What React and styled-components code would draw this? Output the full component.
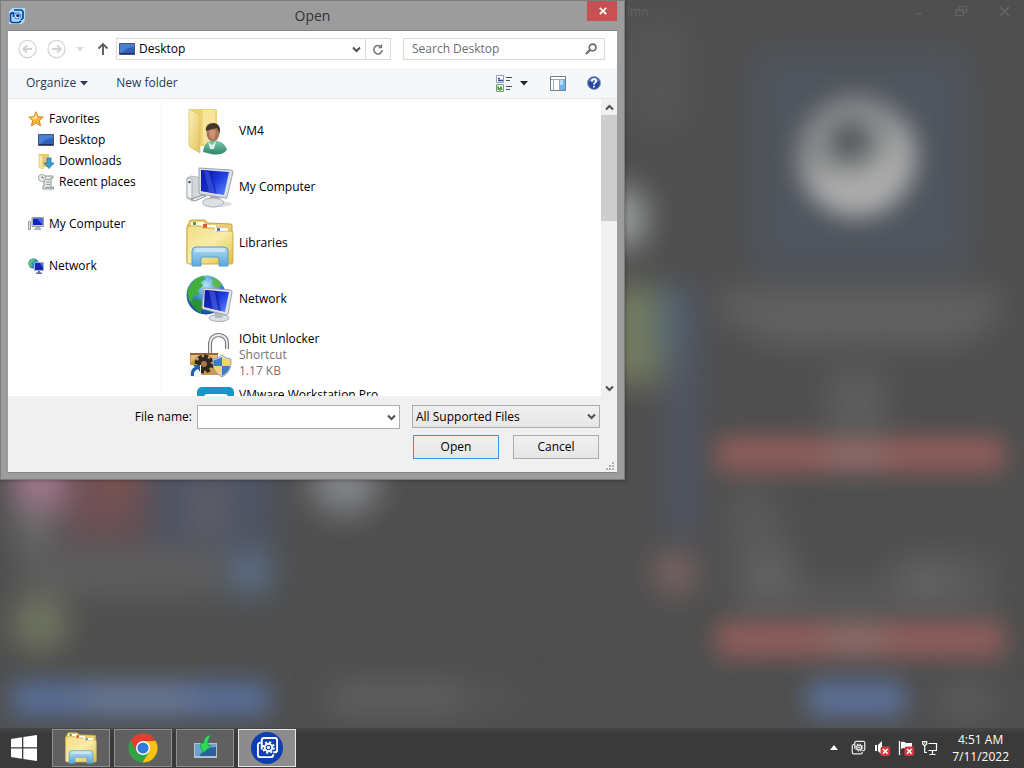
import React, { useState } from 'react';
import styled, { createGlobalStyle } from 'styled-components';

const GlobalStyles = createGlobalStyle`
  * { box-sizing: border-box; }

  body {
    margin: 0;
    background: #4f4f4f;
    color: #000;
    font: 12px/16px "Open Sans", "Noto Sans", sans-serif;
  }

  button, input, select { font: inherit; color: inherit; }
  svg { display: block; flex: none; }
`;

/* ---------- desktop ---------- */

const Screen = styled.div`
  min-height: 100vh;
  display: flex;
  flex-direction: column;
`;

const Workspace = styled.main`
  position: relative;
  flex: 1;
  overflow: hidden;
  background: #4f4f4f;
`;

const Backdrop = styled.svg`
  position: absolute;
  inset: 0;
  width: 100%;
  height: 100%;
`;

const BackCaption = styled.div`
  position: absolute;
  inset: 0 0 auto 0;
  height: 24px;
  padding: 0 12px 0 627px;
  display: flex;
  align-items: center;
  gap: 30px;
  color: #646464;
`;

const BackTitle = styled.span`
  flex: 1;
`;

/* ---------- dialog ---------- */

const Dialog = styled.section`
  position: relative;
  width: 625px;
  max-width: 100%;
  padding: 0 7px 6px;
  background: #9c9c9c;
  border: 1px solid #7c7c7c;
  box-shadow: 0 0 4px rgba(0, 0, 0, 0.4);
`;

const TitleBar = styled.header`
  height: 29px;
  display: grid;
  grid-template-columns: 30px 1fr 30px;
  align-items: center;

  svg { margin-left: 1px; }
`;

const Title = styled.h1`
  margin: 0;
  text-align: center;
  color: #333;
  font-size: 14px;
  font-weight: 400;
  line-height: 20px;
`;

const CloseButton = styled.button`
  align-self: start;
  width: 30px;
  height: 20px;
  padding: 0;
  display: flex;
  align-items: center;
  justify-content: center;
  border: 0;
  background: #c84f52;
`;

const Body = styled.div`
  background: #fff;
  border: solid #848484;
  border-width: 1px 0;
`;

const NavRow = styled.nav`
  height: 37px;
  padding: 0 12px 1px 10px;
  display: flex;
  align-items: center;
`;

const IconButton = styled.button`
  width: ${(p) => p.$w || 20}px;
  height: 20px;
  padding: 0;
  display: flex;
  align-items: center;
  justify-content: center;
  border: 0;
  background: none;
`;

const HistoryButtons = styled.div`
  width: 98px;
  display: flex;
  align-items: center;
  gap: 9px;
`;

const Field = styled.div`
  height: 22px;
  display: flex;
  align-items: center;
  border: 1px solid #d9d9d9;
  background: #fff;
`;

const AddressField = styled(Field)`
  flex: 1;
  margin-right: 12px;
  padding-left: 2px;
  gap: 4px;
`;

const AddressText = styled.span`
  flex: 1;
`;

const RefreshButton = styled(IconButton)`
  border-left: 1px solid #d9d9d9;
`;

const SearchField = styled(Field)`
  width: 202px;
  padding: 0 7px 0 8px;

  input {
    flex: 1;
    min-width: 0;
    padding: 0;
    border: 0;
    outline: 0;
    background: none;
  }

  input::placeholder { color: #6d6d6d; opacity: 1; }
`;

const CommandBar = styled.div`
  height: 31px;
  padding: 0 15px 0 18px;
  display: flex;
  align-items: center;
  background: #f5f7f8;
  border-bottom: 1px solid #e3e8ec;
  color: #2a3a58;
`;

const CommandButton = styled.button`
  margin-right: 28px;
  padding: 0;
  display: flex;
  align-items: center;
  gap: 4px;
  border: 0;
  background: none;
`;

const CommandIcons = styled.div`
  margin-left: auto;
  display: flex;
  align-items: center;
`;

const ViewIcons = styled.div`
  margin-right: 13px;
  display: flex;
`;

const PaneIcon = styled.div`
  margin-right: 18px;
`;

const Browser = styled.div`
  height: 297px;
  display: grid;
  grid-template-columns: 153px 1fr 16px;
  overflow: hidden;
`;

const Sidebar = styled.ul`
  margin: 0;
  padding: 9px 0 0 20px;
  list-style: none;
  border-right: 1px solid #fafafa;
`;

const SidebarItem = styled.li`
  height: 21px;
  margin-bottom: ${(p) => (p.$last ? 21 : 0)}px;
  padding-left: ${(p) => (p.$child ? 10 : 0)}px;

  a {
    display: flex;
    align-items: center;
    gap: 5px;
    height: 21px;
    color: #000;
    text-decoration: none;
  }
`;

const FileList = styled.ul`
  margin: 0;
  padding: 4px 0 0 25px;
  list-style: none;
  overflow: hidden;
`;

const FileItem = styled.li`
  height: 56px;
  padding: 4px 0;
  display: flex;
  align-items: ${(p) => (p.$top ? 'flex-start' : 'center')};
  gap: 5px;
`;

const FileText = styled.div`
  color: #737373;

  strong {
    display: block;
    color: #000;
    font-weight: 400;
  }

  span { display: block; }
`;

const ScrollBar = styled.div`
  display: flex;
  flex-direction: column;
  align-items: center;
  background: #f0f0f0;
`;

const ScrollThumb = styled.div`
  width: 16px;
  height: 106px;
  margin-bottom: auto;
  background: #cdcdcd;
`;

const ScrollButton = styled(IconButton)`
  width: 16px;
  height: 16px;
`;

const Footer = styled.footer`
  height: 76px;
  padding: 9px 17px 0 0;
  display: grid;
  grid-template-columns: 1fr 203px 12px 188px;
  grid-template-rows: 24px 24px;
  row-gap: 6px;
  background: #f0f0f0;
`;

const FileLabel = styled.label`
  padding-right: 5px;
  line-height: 24px;
  text-align: right;
`;

const ComboBox = styled.div`
  padding: 0 3px 0 4px;
  display: flex;
  align-items: center;
  border: 1px solid #abadb3;
  background: #fff;

  input {
    flex: 1;
    min-width: 0;
    padding: 0;
    border: 0;
    outline: 0;
  }
`;

const TypeSelect = styled.div`
  grid-column: 4;
  display: grid;
  align-items: center;
  height: 23px;

  select, svg { grid-area: 1 / 1; }

  select {
    width: 100%;
    height: 23px;
    padding: 0 20px 0 3px;
    border: 1px solid #acacac;
    border-radius: 0;
    background: linear-gradient(#f0f0f0, #e6e6e6);
    appearance: none;
  }

  svg {
    justify-self: end;
    margin-right: 4px;
    pointer-events: none;
  }
`;

const FooterButtons = styled.div`
  grid-column: 4;
  display: flex;
  justify-content: space-between;
  padding: 0 1px;
`;

const PushButton = styled.button`
  width: 86px;
  height: 24px;
  padding: 0;
  border: 1px solid ${(p) => (p.$primary ? '#4a90dc' : '#acacac')};
  background: linear-gradient(#f0f0f0, #e6e6e6);
`;

const Grip = styled.svg`
  position: absolute;
  right: 9px;
  bottom: 8px;
`;

/* ---------- taskbar ---------- */

const Taskbar = styled.footer`
  height: 40px;
  padding: 0 15px 1px 0;
  display: flex;
  align-items: center;
  gap: 4px;
  background: linear-gradient(#464646, #3a3a3a 6px);
`;

const StartButton = styled.button`
  width: 48px;
  height: 38px;
  padding: 0 0 0 11px;
  border: 0;
  background: none;
`;

const TaskButton = styled.button`
  width: 58px;
  height: 38px;
  padding: 0;
  display: flex;
  align-items: center;
  justify-content: center;
  border: 1px solid ${(p) => (p.$active ? '#e8e8e8' : '#8e8e8e')};
  background: ${(p) => (p.$active ? '#8c8c8c' : '#606060')};
`;

const Tray = styled.div`
  margin-left: auto;
  display: flex;
  align-items: center;
  gap: 8px;
`;

const Clock = styled.time`
  margin-left: 6px;
  color: #fff;
  line-height: 17px;
  text-align: center;

  span { display: block; }
`;

/* ---------- small glyphs ---------- */

const Chevron = ({ up, color = '#505050' }) => (
  <svg width="9" height="7" viewBox="0 0 9 7" aria-hidden="true">
    <path d={up ? 'M1 5.5 4.5 2 8 5.5' : 'M1 1.5 4.5 5 8 1.5'} fill="none" stroke={color} strokeWidth="2" />
  </svg>
);

const Triangle = ({ color }) => (
  <svg width="8" height="5" viewBox="0 0 8 5" aria-hidden="true">
    <path d="M0 0h8L4 4.5z" fill={color} />
  </svg>
);

const HistoryArrow = ({ forward }) => (
  <svg width="20" height="20" viewBox="0 0 20 20" fill="none" stroke="#d2d2d2" aria-hidden="true">
    <circle cx="9.5" cy="10" r="8.6" strokeWidth="1.2" />
    <path d={forward ? 'M5 10h8.5M10 6.3 13.7 10 10 13.700' : 'M14 10H5.500M9 6.3 5.3 10 9 13.700'} strokeWidth="1.9" />
  </svg>
);

const UpArrow = () => (
  <svg width="12" height="14" viewBox="0 0 12 14" fill="none" stroke="#5c5c5c" strokeWidth="1.9" aria-hidden="true">
    <path d="M6 13V2M1.5 6.5 6 2l4.5 4.5" />
  </svg>
);

const RefreshGlyph = () => (
  <svg width="12" height="13" viewBox="0 0 12 13" aria-hidden="true">
    <path d="M9.2 4A4.2 4.2 0 1 0 10.2 7" fill="none" stroke="#777" strokeWidth="1.6" />
    <path d="M10.2.8v4.4H5.8z" fill="#777" />
  </svg>
);

const SearchGlyph = () => (
  <svg width="12" height="12" viewBox="0 0 12 12" fill="none" stroke="#6b6b6b" aria-hidden="true">
    <circle cx="7.6" cy="4.4" r="3.3" strokeWidth="1.6" />
    <path d="M5.2 6.8 1 11" strokeWidth="2.2" />
  </svg>
);

const CrossGlyph = () => (
  <svg width="8" height="8" viewBox="0 0 8 8" aria-hidden="true">
    <path d="m.8.8 6.4 6.4M7.2.8.8 7.2" stroke="#fff" strokeWidth="1.7" />
  </svg>
);

const ViewGlyph = () => (
  <svg width="17" height="17" viewBox="0 0 17 17" aria-hidden="true">
    <path fill="#fff" stroke="#8fa3bd" d="M.5.5h7v7h-7z" />
    <path fill="#fff" stroke="#7fa37b" d="M.5 9.5h7v7h-7z" />
    <path d="M2 5.5h5M2 3.500h2" stroke="#2c4a9c" strokeWidth="1.4" />
    <path d="M2 15v-3l2 3 1-3 1 3" fill="none" stroke="#4b9a3c" strokeWidth="1.300" />
    <path d="M10 2.500h6M10 5.500h4M10 11.500h6M10 14.500h4" stroke="#44505f" />
  </svg>
);

const PreviewPaneGlyph = () => (
  <svg width="16" height="15" viewBox="0 0 16 15" aria-hidden="true">
    <path fill="#fff" stroke="#6d7e90" d="M.5.5h15v14H.5z" />
    <path d="M1 3.500h14M3.500 4v10M9.500 4v10" stroke="#9aa7b4" />
    <path fill="#6db6ea" d="M10 4h5v10h-5z" />
    <path fill="#b4def9" d="M10 4h3v5h-3z" />
  </svg>
);

const HelpGlyph = () => (
  <svg width="14" height="14" viewBox="0 0 14 14" aria-hidden="true">
    <circle cx="7" cy="7" r="6.500" fill="#24489f" stroke="#8e9dbb" />
    <path d="M2 5a5.300 5.300 0 0 1 10 0Q7 8 2 5" fill="#5d84cd" />
    <path d="M4.800 5.300C4.800 2.300 9.200 2.400 9.200 5 9.200 6.700 7 6.500 7 8.700M7 9.700v1.800" fill="none" stroke="#fff" strokeWidth="1.700" />
  </svg>
);

/* Two overlapping rounded frames with a cog in the middle, used in the taskbar and the tray */
const CaptureMark = ({ size, color, width = 2 }) => (
  <svg width={size} height={size} viewBox="0 0 24 24" fill="none" stroke={color} strokeWidth={width} aria-hidden="true">
    <path d="M5 7H4.500A2.500 2.500 0 0 0 2 9.500v10A2.500 2.500 0 0 0 4.500 22h11a2.500 2.500 0 0 0 2.500-2.500V19" />
    <path d="M6 14V4.500A2.500 2.500 0 0 1 8.500 2h11A2.500 2.500 0 0 1 22 4.500v10a2.500 2.500 0 0 1-2.500 2.500H18" />
    <circle cx="13" cy="12" r="5.600" strokeDasharray="2.200 2.198" />
    <circle cx="13" cy="12" r="3.900" />
    <circle cx="13" cy="12" r="1.700" fill={color} stroke="none" />
  </svg>
);

const AppGlyph = () => (
  <svg width="16" height="16" viewBox="0 0 16 16" aria-hidden="true">
    <path fill="#a6e0ff" d="M3 0h13v12l-3 4H0V4z" />
    <path d="M5 2h7.500L14 3.500V10l-2 2M3.500 4.500 1.500 6v7L3 14.500h7l2-1.500M4.500 9V4" fill="none" stroke="#173a94" strokeWidth="1.700" />
    <circle cx="8.500" cy="7.800" r="3" fill="#fff" stroke="#2d86e4" strokeWidth="1.500" strokeDasharray="2 .7" />
    <circle cx="8.800" cy="7.600" r="1.700" fill="#16266f" />
  </svg>
);

/* ---------- 16px icons ---------- */

const DesktopSmall = () => (
  <svg width="16" height="16" viewBox="0 0 16 16" aria-hidden="true">
    <path d="M.5 2.500h15v11H.5z" fill="#2d60b8" stroke="#48566e" />
    <path d="M1 3h14v3Q7 6 3 12H1z" fill="#4a80d2" />
    <path d="M1 12h14v1H1z" fill="#1d3156" />
  </svg>
);

const StarSmall = () => (
  <svg width="16" height="16" viewBox="0 0 16 16" aria-hidden="true">
    <path d="m8 .8 2 4.900 5.300.4-4 3.500 1.200 5.300L8 12l-4.600 2.900 1.300-5.300-4-3.500 5.200-.4z" fill="#f8b83a" stroke="#d98324" />
    <path d="m8 3 1.300 3.500-2.800 2L3 6.700l3.500-.3z" fill="#ffe9a1" />
  </svg>
);

const DownloadsSmall = () => (
  <svg width="16" height="16" viewBox="0 0 16 16" aria-hidden="true">
    <path d="M1 1h10v13H1z" fill="#e8cb6c" />
    <path d="m1 1 4 2v13l-4-2z" fill="#f8e7a4" stroke="#d3b45b" strokeWidth=".6" />
    <path d="M9 5h4v5h3l-5 5.500L6 10h3z" fill="#3ba0d8" stroke="#246da4" strokeWidth=".8" />
  </svg>
);

const RecentSmall = () => (
  <svg width="16" height="16" viewBox="0 0 16 16" aria-hidden="true">
    <path d="M6 2h9v2h-2v9h2.500v2H5v-3h1z" fill="#e4e7e6" stroke="#8d9492" />
    <path d="M8 5.500h4M8 8h4M8 10.500h4M7 13.500h7" stroke="#9aa09e" />
    <circle cx="4" cy="4" r="3.500" fill="#f4f6f5" stroke="#98a09d" />
    <path d="M4 2v2h2" fill="none" stroke="#727876" />
  </svg>
);

const ComputerSmall = () => (
  <svg width="16" height="16" viewBox="0 0 16 16" aria-hidden="true">
    <path d="M.5 5.500h2v8h-2z" fill="#e5e7ea" stroke="#92979c" />
    <path d="M4 1.500h11.500v9H4z" fill="#c8cdd6" stroke="#969daa" />
    <path d="M5 2.500h9.500V9H5z" fill="#1524b8" />
    <path d="M9 2.500h5.500V9z" fill="#4b68e0" />
    <path d="M8 11h4l1.500 3H5.500z" fill="#afb5bd" />
  </svg>
);

const NetworkSmall = () => (
  <svg width="16" height="16" viewBox="0 0 16 16" aria-hidden="true">
    <circle cx="5.500" cy="5.500" r="5.200" fill="#2f8fc2" />
    <path d="M1 3q3-3 6-2L5 4 3 5l1 3-1 2Q0 7 1 3" fill="#5fbf75" />
    <path d="M6.500 4.500h9v8h-9z" fill="#1428b0" stroke="#9fb4dc" />
    <path d="M12 5h3v5z" fill="#4f78e0" />
    <path d="M10 13h2v1.500h2V16H8v-1.500h2z" fill="#5a6f92" />
  </svg>
);

/* ---------- 48px icons ---------- */

const UserFolder = () => (
  <svg width="48" height="48" viewBox="0 0 48 48" aria-hidden="true">
    <defs>
      <linearGradient id="folderFlap" x2="1" y2="1">
        <stop offset="0" stopColor="#fdf2bd" />
        <stop offset="1" stopColor="#e2c25a" />
      </linearGradient>
      <linearGradient id="shirt" y2="1" x2="0">
        <stop offset="0" stopColor="#7cc9ac" />
        <stop offset="1" stopColor="#2e8468" />
      </linearGradient>
    </defs>
    <path d="M4 2h25q2 0 2 2v35H13z" fill="#ecd477" />
    <path d="M17 3h12l1 34H17z" fill="#f7e59b" />
    <path d="m3 2 9 5q2 1 2 3v36L4 40q-1-1-1-3z" fill="url(#folderFlap)" stroke="#d9bb59" strokeWidth=".7" />
    <path d="M17 45q1-10 8-11h7q7 2 9 9-5 6-16 4z" fill="url(#shirt)" />
    <path d="m22 35 4 3 4-4-2 8h-4z" fill="#dcefe5" />
    <ellipse cx="27" cy="26" rx="6.500" ry="8.500" fill="#a87456" />
    <path d="M20 24q-1-8 8-8 7 1 6 10l-3-5q-6 1-11 3z" fill="#43352b" />
    <path d="M23 24q4-3 7 0l-2 9q-5-2-5-9" fill="#c99270" />
  </svg>
);

const MyComputer = () => (
  <svg width="48" height="48" viewBox="-1 -3 48 48" aria-hidden="true">
    <defs>
      <linearGradient id="screenBlue" x2="1" y2="1">
        <stop offset="0" stopColor="#0d17a0" />
        <stop offset=".45" stopColor="#1b35dc" />
        <stop offset="1" stopColor="#5e8cf5" />
      </linearGradient>
    </defs>
    <ellipse cx="31" cy="38" rx="14" ry="3" fill="#dedede" />
    <path d="m0 12 4-2 11 2v19L5 35l-5-3z" fill="#d3d7da" stroke="#9da3a8" strokeWidth=".7" />
    <path d="m0 12 5 1v20l-5-2z" fill="#f0f1f2" stroke="#999fa3" strokeWidth=".7" />
    <circle cx="2.500" cy="16" r="1.300" fill="#4e5a60" />
    <path d="m4 33 12-4 3 1-11 5z" fill="#e8e8e8" stroke="#8e9599" />
    <path d="M23 30h9l1 6h-9z" fill="#9fa9b3" />
    <ellipse cx="26" cy="36.500" rx="10.500" ry="4.500" fill="#dce1e5" stroke="#a6adb3" />
    <path d="m12 2 32 2q2 0 2 2l-6 25q0 2-2 1l-25-4q-1 0-1-2z" fill="#dadfe6" stroke="#9ba4b0" />
    <path d="m14 4 28 2-5 23-23-4z" fill="url(#screenBlue)" />
    <path d="m14 4 10 1 6 23-16-3z" fill="#1420b2" opacity=".6" />
    <path d="m17 5 5 1 6 21-6-1z" fill="#5672f0" opacity=".4" />
  </svg>
);

const Libraries = ({ size = 48, id = 'lib' }) => (
  <svg width={size} height={size} viewBox="0 0 48 48" aria-hidden="true">
    <defs>
      <linearGradient id={`${id}Front`} x2="1" y2="1">
        <stop offset="0" stopColor="#f2de85" />
        <stop offset=".5" stopColor="#f9ecaa" />
        <stop offset="1" stopColor="#dfbd3e" />
      </linearGradient>
      <linearGradient id={`${id}Stand`} x2="0" y2="1">
        <stop offset="0" stopColor="#b4dcf0" />
        <stop offset="1" stopColor="#58a7d8" />
      </linearGradient>
    </defs>
    <path d="M3 4q0-3 3-3h12q2 0 3 3l24 1q1 0 1 2v36H1V8z" fill="#e9cf72" stroke="#c4a23e" />
    <path d="M5 3h13v4H5zM16 6h14v4H16zM29 9h13v4H29z" fill="#fffef0" />
    <path d="M7 3h3v3H7z" fill="#4f9a46" />
    <path d="M17 5h4v4h-4z" fill="#dc5835" />
    <path d="M1 9q0-2 2-2h11q2 0 3 2h10q2 0 3 3h15q2 0 2 2v29q0 2-2 2H3q-2 0-2-2z" fill={`url(#${id}Front)`} stroke="#cdae4b" />
    <path d="M29 9h13v3H29z" fill="#fffef0" />
    <path d="M31 9h3v3h-3z" fill="#4780a8" />
    <path d="M6 32q0-4 4-4h28q4 0 4 4v15h-9v-7q0-2-2-2H17q-2 0-2 2v7H6z" fill={`url(#${id}Stand)`} stroke="#5ba0cb" />
    <path d="M9 31q0-2 2-2h26q2 0 2 2v2H9z" fill="#c4e6f6" />
  </svg>
);

const NetworkLarge = () => (
  <svg width="48" height="48" viewBox="0 0 48 48" aria-hidden="true">
    <defs>
      <radialGradient id="globe" cx=".5" cy=".25" r=".8">
        <stop offset="0" stopColor="#b2e4f8" />
        <stop offset=".5" stopColor="#3585cc" />
        <stop offset="1" stopColor="#153e94" />
      </radialGradient>
    </defs>
    <circle cx="20" cy="20" r="19.500" fill="url(#globe)" />
    <path d="M3 12Q8 3 17 1l3 3-5 3 2 4-5 4 1 4-5 2-3 7q-5-6-2-16" fill="#43ae3f" />
    <path d="M24 2q8 1 12 8l-5 3-5-3 1-4z" fill="#5dba4a" />
    <path d="m8 24 6 1 3 5-2 8q-8-4-10-11z" fill="#2d9133" />
    <ellipse cx="33" cy="43" rx="10" ry="3.500" fill="#dce1e5" stroke="#a6adb3" />
    <path d="m27 35 9 1 1 7h-8z" fill="#b4bac1" />
    <path d="m18 13 26 2q2 0 2 2l-4 22q0 1-2 1l-23-6q-1 0-1-2z" fill="#e1e5eb" stroke="#9ba4b0" />
    <path d="m19 15 24 2-4 20-21-5z" fill="url(#screenBlue)" />
    <path d="m19 15 12 1 4 20-17-4z" fill="#101ca4" opacity=".55" />
    <path d="m23 16 6 1 3 18-5-1z" fill="#6d83f3" opacity=".4" />
  </svg>
);

const Unlocker = () => (
  <svg width="48" height="48" viewBox="0 0 48 48" aria-hidden="true">
    <path d="M24 22V12q1-8 9-8 8 1 8 8v6" fill="none" stroke="#777" strokeWidth="4" />
    <path d="M24 22V12q1-8 9-8 8 1 8 8v6" fill="none" stroke="#eee" strokeWidth="1.800" />
    <path d="M4 22h28v22H4z" fill="#c99a56" />
    <path d="M4 22h28v2H4z" fill="#94683a" />
    <path d="M5 24h8l-8 7zM23 24h8v7z" fill="#e4bd7c" />
    <circle cx="18" cy="33" r="7.500" fill="none" stroke="#2a241f" strokeWidth="4" strokeDasharray="3.500 2.390" />
    <circle cx="18" cy="33" r="5" fill="#a67a48" stroke="#2f2823" strokeWidth="4" />
    <path d="M36 24q4 4 9 4 1 13-9 18-10-5-9-18 5 0 9-4" fill="#d8dee6" stroke="#94a0ae" />
    <path d="M36 26v9h-8q-1-3 0-6 4 0 8-3m0 9h8q-1 6-8 10z" fill="#3f7cc0" />
    <path d="M36 26q4 3 8 3v6h-8zm-8 9h8v10q-7-4-8-10" fill="#f5d56a" />
    <path d="M3 34h12v12H3z" fill="#f4f6f9" />
    <path d="M5 45q-1-7 4-9l-2-2h7v7l-2-3q-5 2-4 7z" fill="#2360b0" />
  </svg>
);

const VmwareLarge = () => (
  <svg width="48" height="48" viewBox="0 0 48 48" aria-hidden="true">
    <rect x="11" width="37" height="44" rx="5" fill="#1597c5" />
    <rect x="18" y="7" width="24" height="24" rx="3" fill="#fff" />
  </svg>
);

/* ---------- taskbar icons ---------- */

const WindowsLogo = () => (
  <svg width="26" height="26" viewBox="0 0 26 26" fill="#fff" aria-hidden="true">
    <path d="M0 4 11 2.300V12.300H0zM12.300 2.100 26 0v12.300H12.300zM0 13.600h11V23.700L0 22zM12.300 13.600H26V26l-13.700-2z" />
  </svg>
);

const ChromeLogo = () => (
  <svg width="30" height="30" viewBox="0 0 30 30" aria-hidden="true">
    <circle cx="15" cy="15" r="14.500" fill="#34a348" />
    <path d="M2.500 7.500A14.500 14.500 0 0 1 27.600 7.900H15L8.800 18.500z" fill="#e43c30" />
    <path d="M27.600 7.900A14.500 14.500 0 0 1 14.600 29.500L21.200 18.500 15 7.900z" fill="#fbc116" />
    <circle cx="15" cy="15" r="7" fill="#fff" />
    <circle cx="15" cy="15" r="5.600" fill="#2f7be0" />
  </svg>
);

const InstallerLogo = () => (
  <svg width="26" height="26" viewBox="0 0 26 26" aria-hidden="true">
    <path d="M2 8h23v15H2z" fill="#b2c3cf" />
    <path d="M3 9h21v12H3z" fill="#2a62a0" />
    <path d="M3 9h21v3q-11 0-17 9H3z" fill="#6ba3cf" />
    <path d="M17 0q-6 3-5 8l-4 1 3 9 8-7-3-1q-1-4 2-9z" fill="#2bdb55" stroke="#159a3c" strokeWidth=".7" />
  </svg>
);

const CaptureBadge = styled.span`
  width: 32px;
  height: 32px;
  display: flex;
  align-items: center;
  justify-content: center;
  border-radius: 50%;
  background: #0d3fb0;
`;

const RedBadge = () => (
  <>
    <rect x="6.500" y="6.500" width="9.500" height="9.500" rx="2" fill="#d8393c" />
    <path d="m9 9 4.600 4.600m0-4.600L9 13.600" stroke="#fff" strokeWidth="1.500" />
  </>
);

const SpeakerGlyph = () => (
  <svg width="16" height="16" viewBox="0 0 16 16" aria-hidden="true">
    <path d="M1 5h2v6H1zM4 5l4-4v14l-4-4z" fill="#fff" />
    <RedBadge />
  </svg>
);

const FlagGlyph = () => (
  <svg width="16" height="16" viewBox="0 0 16 16" aria-hidden="true">
    <path d="M1.500 1v14" stroke="#fff" strokeWidth="1.300" />
    <path d="M3 2q3-1 5 1h6v6H8Q6 7 3 9z" fill="#fff" />
    <RedBadge />
  </svg>
);

const LanGlyph = () => (
  <svg width="16" height="16" viewBox="0 0 16 16" fill="none" stroke="#fff" strokeWidth="1.200" aria-hidden="true">
    <path d="M6.500 3.500h8v7h-8M10.500 11v3M7.500 14.500h6M2.700 6v6.500H5" />
    <path d="M.7 1.500h4V4l-2 2-2-2zM2.700 1.500v2" />
  </svg>
);

/* Out-of-focus application window behind the dialog */
const BlurredApp = () => (
  <Backdrop viewBox="0 0 1024 728" preserveAspectRatio="none" aria-hidden="true">
    <defs>
      <filter id="soft" filterUnits="userSpaceOnUse" x="-60" y="-60" width="1144" height="848" colorInterpolationFilters="sRGB">
        <feGaussianBlur stdDeviation="16" />
      </filter>
      <filter id="bar" filterUnits="userSpaceOnUse" x="-60" y="-60" width="1144" height="848" colorInterpolationFilters="sRGB">
        <feGaussianBlur stdDeviation="12" />
      </filter>
    </defs>
    <g filter="url(#soft)">
      <rect x="752" y="50" width="218" height="222" rx="12" fill="#50555e" />
      <rect x="625" y="20" width="65" height="110" fill="#565656" />
      <ellipse cx="622" cy="218" rx="24" ry="32" fill="#a0a3a4" />
      <rect x="600" y="286" width="64" height="98" fill="#747a60" />
      <rect x="655" y="290" width="20" height="64" fill="#587072" />
      <rect x="672" y="286" width="22" height="248" fill="#515970" />
      <path d="M720 290h280v25l-35 29H770l-50-29z" fill="#626262" />
      <rect x="828" y="370" width="58" height="72" fill="#5e5e5e" />
      <circle cx="675" cy="573" r="19" fill="#8c6c6c" />
      <path d="M730 485h40l30 100h80l20-30h95v68H735z" fill="#5a5a5a" />
      <circle cx="772" cy="577" r="20" fill="#666" />
      <ellipse cx="928" cy="580" rx="26" ry="16" fill="#666" />
      <rect x="940" y="688" width="52" height="26" fill="#606060" />
      <rect x="14" y="450" width="50" height="62" fill="#a5798f" />
      <rect x="18" y="505" width="32" height="42" fill="#707070" />
      <rect x="65" y="450" width="80" height="90" fill="#6c5056" />
      <rect x="98" y="460" width="38" height="42" fill="#7c5350" />
      <rect x="154" y="450" width="122" height="96" fill="#4f5465" />
      <rect x="194" y="475" width="30" height="62" fill="#606068" />
      <ellipse cx="345" cy="484" rx="34" ry="30" fill="#85878a" />
      <rect x="20" y="550" width="200" height="44" fill="#5f5f5f" />
      <circle cx="250" cy="572" r="22" fill="#5d7390" />
      <circle cx="40" cy="624" r="27" fill="#747a62" />
      <rect x="330" y="684" width="132" height="28" fill="#636363" />
      <rect x="465" y="686" width="55" height="26" fill="#565656" />
    </g>
    <g filter="url(#bar)">
      <circle cx="857" cy="157" r="60" fill="#8c8e8f" />
      <path d="M802 165q8 50 55 52 50-4 58-60-3-26-20-44 4 30-12 48-36 26-81 4" fill="#adadad" />
      <circle cx="850" cy="141" r="19" fill="#505355" />
      <rect x="716" y="438" width="288" height="33" fill="#925e5b" />
      <rect x="716" y="623" width="288" height="33" fill="#925e5b" />
      <rect x="825" y="438" width="62" height="33" fill="#906a67" />
      <rect x="825" y="623" width="62" height="33" fill="#906a67" />
      <rect x="808" y="682" width="97" height="34" fill="#5c7199" />
      <rect x="12" y="682" width="257" height="34" fill="#586e98" />
      <rect x="80" y="684" width="115" height="30" fill="#667796" />
    </g>
  </Backdrop>
);

const places = [
  { name: 'Favorites', Icon: StarSmall },
  { name: 'Desktop', Icon: DesktopSmall, child: true },
  { name: 'Downloads', Icon: DownloadsSmall, child: true },
  { name: 'Recent places', Icon: RecentSmall, child: true, last: true },
  { name: 'My Computer', Icon: ComputerSmall, last: true },
  { name: 'Network', Icon: NetworkSmall },
];

const files = [
  { name: 'VM4', Icon: UserFolder },
  { name: 'My Computer', Icon: MyComputer },
  { name: 'Libraries', Icon: Libraries },
  { name: 'Network', Icon: NetworkLarge },
  { name: 'IObit Unlocker', Icon: Unlocker, details: ['Shortcut', '1.17 KB'] },
  { name: 'VMware Workstation Pro', Icon: VmwareLarge, top: true },
];

function OpenDialog() {
  const [fileName, setFileName] = useState('');
  const [search, setSearch] = useState('');

  return (
    <Dialog role="dialog" aria-labelledby="dialog-title">
      <TitleBar>
        <AppGlyph />
        <Title id="dialog-title">Open</Title>
        <CloseButton type="button" aria-label="Close"><CrossGlyph /></CloseButton>
      </TitleBar>

      <Body>
        <NavRow>
          <HistoryButtons>
            <IconButton type="button" aria-label="Back"><HistoryArrow /></IconButton>
            <IconButton type="button" aria-label="Forward"><HistoryArrow forward /></IconButton>
            <IconButton type="button" aria-label="Recent locations" $w={8}><Triangle color="#dadada" /></IconButton>
            <IconButton type="button" aria-label="Up" $w={20}><UpArrow /></IconButton>
          </HistoryButtons>
          <AddressField>
            <DesktopSmall />
            <AddressText>Desktop</AddressText>
            <IconButton type="button" aria-label="Previous locations" $w={10}><Chevron /></IconButton>
            <RefreshButton type="button" aria-label="Refresh" $w={25}><RefreshGlyph /></RefreshButton>
          </AddressField>
          <SearchField>
            <input
              type="text"
              aria-label="Search Desktop"
              placeholder="Search Desktop"
              value={search}
              onChange={(e) => setSearch(e.target.value)}
            />
            <SearchGlyph />
          </SearchField>
        </NavRow>

        <CommandBar>
          <CommandButton type="button">Organize <Triangle color="#2a3a58" /></CommandButton>
          <CommandButton type="button">New folder</CommandButton>
          <CommandIcons>
            <ViewIcons>
              <IconButton type="button" aria-label="Change view" $w={18}><ViewGlyph /></IconButton>
              <IconButton type="button" aria-label="More views" $w={22}><Triangle color="#1c2538" /></IconButton>
            </ViewIcons>
            <PaneIcon>
              <IconButton type="button" aria-label="Preview pane"><PreviewPaneGlyph /></IconButton>
            </PaneIcon>
            <IconButton type="button" aria-label="Help" $w={16}><HelpGlyph /></IconButton>
          </CommandIcons>
        </CommandBar>

        <Browser>
          <Sidebar>
            {places.map(({ name, Icon, child, last }) => (
              <SidebarItem key={name} $child={child} $last={last}>
                <a href="#places"><Icon />{name}</a>
              </SidebarItem>
            ))}
          </Sidebar>
          <FileList>
            {files.map(({ name, Icon, details = [], top }) => (
              <FileItem key={name} $top={top}>
                <Icon />
                <FileText>
                  <strong>{name}</strong>
                  {details.map((line) => <span key={line}>{line}</span>)}
                </FileText>
              </FileItem>
            ))}
          </FileList>
          <ScrollBar>
            <ScrollButton type="button" aria-label="Scroll up"><Chevron up /></ScrollButton>
            <ScrollThumb />
            <ScrollButton type="button" aria-label="Scroll down"><Chevron /></ScrollButton>
          </ScrollBar>
        </Browser>

        <Footer>
          <FileLabel htmlFor="file-name">File name:</FileLabel>
          <ComboBox>
            <input id="file-name" type="text" value={fileName} onChange={(e) => setFileName(e.target.value)} />
            <Chevron />
          </ComboBox>
          <TypeSelect>
            <select aria-label="File type" defaultValue="all">
              <option value="all">All Supported Files</option>
            </select>
            <Chevron />
          </TypeSelect>
          <FooterButtons>
            <PushButton type="button" $primary>Open</PushButton>
            <PushButton type="button">Cancel</PushButton>
          </FooterButtons>
        </Footer>
      </Body>

      <Grip width="10" height="10" viewBox="0 0 10 10" fill="#b3b3b3" aria-hidden="true">
        <path d="M7 1h2v2H7zM4 4h2v2H4zM7 4h2v2H7zM1 7h2v2H1zM4 7h2v2H4zM7 7h2v2H7z" />
      </Grip>
    </Dialog>
  );
}

function App() {
  return (
    <Screen>
      <GlobalStyles />
      <Workspace>
        <BlurredApp />
        <BackCaption>
          <BackTitle>lmn</BackTitle>
          <svg width="14" height="14" viewBox="0 0 14 14" stroke="currentColor" aria-hidden="true"><path d="M5 8.500h7" /></svg>
          <svg width="14" height="14" viewBox="0 0 14 14" fill="none" stroke="currentColor" aria-hidden="true">
            <path d="M1.500 4.500h8v6h-8zM4.500 4V1.500h8v6H10M2 6h7" />
          </svg>
          <svg width="14" height="14" viewBox="0 0 14 14" stroke="currentColor" strokeWidth="1.500" aria-hidden="true"><path d="m2 2 9 9m0-9-9 9" /></svg>
        </BackCaption>
        <OpenDialog />
      </Workspace>

      <Taskbar>
        <StartButton type="button" aria-label="Start"><WindowsLogo /></StartButton>
        <TaskButton type="button" aria-label="File Explorer"><Libraries size={32} id="explorer" /></TaskButton>
        <TaskButton type="button" aria-label="Chrome"><ChromeLogo /></TaskButton>
        <TaskButton type="button" aria-label="Installer"><InstallerLogo /></TaskButton>
        <TaskButton type="button" aria-label="Screen capture" $active>
          <CaptureBadge><CaptureMark size={23} color="#fff" /></CaptureBadge>
        </TaskButton>
        <Tray>
          <IconButton type="button" aria-label="Show hidden icons" $w={16}>
            <svg width="8" height="5" viewBox="0 0 8 5" aria-hidden="true"><path d="M0 5h8L4 0z" fill="#fff" /></svg>
          </IconButton>
          <IconButton type="button" aria-label="Virtual machine tools" $w={16}><CaptureMark size={15} color="#e8e8e8" /></IconButton>
          <IconButton type="button" aria-label="Volume" $w={16}><SpeakerGlyph /></IconButton>
          <IconButton type="button" aria-label="Action center" $w={16}><FlagGlyph /></IconButton>
          <IconButton type="button" aria-label="Network" $w={16}><LanGlyph /></IconButton>
          <Clock dateTime="2022-07-11T04:51"><span>4:51 AM</span><span>7/11/2022</span></Clock>
        </Tray>
      </Taskbar>
    </Screen>
  );
}

export default App;
